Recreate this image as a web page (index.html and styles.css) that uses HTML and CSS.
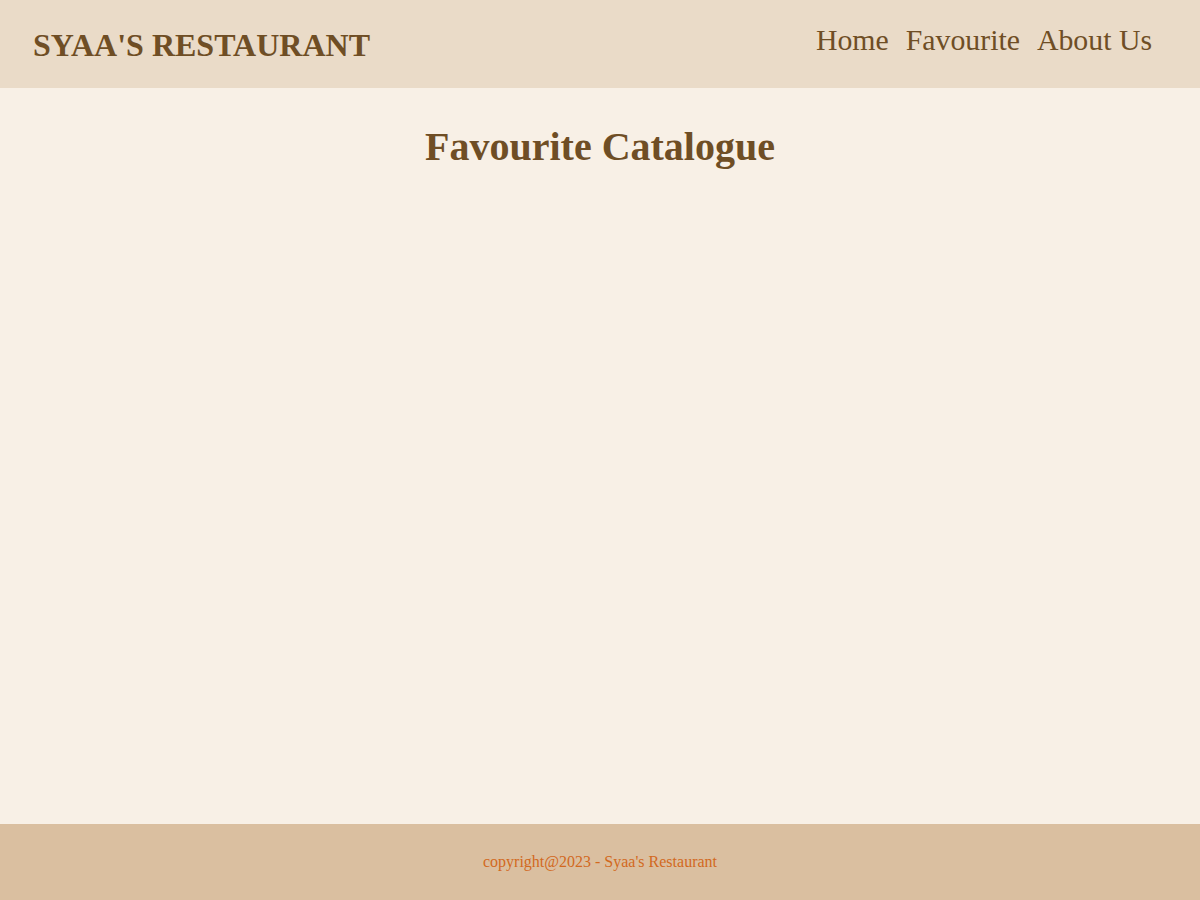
FILE: index.html
```html
<!DOCTYPE html>
<html lang="en">
<head>
<meta charset="utf-8">
<title>Syaa's Restaurant</title>
<link rel="stylesheet" href="styles.css">
</head>
<body>
<div class="page">
  <header class="app-bar">
    <h1 class="brand">SYAA'S RESTAURANT</h1>
    <nav class="nav">
      <a class="nav-link" href="#">Home</a>
      <a class="nav-link" href="#">Favourite</a>
      <a class="nav-link" href="#">About Us</a>
    </nav>
  </header>
  <main class="content">
    <h2 class="content-title">Favourite Catalogue</h2>
  </main>
  <footer class="footer">
    <p class="footer-text">copyright@2023 - Syaa's Restaurant</p>
  </footer>
</div>
</body>
</html>
```

FILE: styles.css
```css
html, body {
  margin: 0;
  padding: 0;
}
body {
  font-family: "Liberation Serif", "Times New Roman", serif;
  background: #f8f0e6;
  color: #6f4e25;
}
.page {
  min-height: 100vh;
  display: flex;
  flex-direction: column;
}
.app-bar {
  height: 88px;
  box-sizing: border-box;
  background: #eadbc8;
  display: flex;
  align-items: center;
  justify-content: space-between;
  padding: 0 48px 0 33px;
}
.brand {
  margin: 2px 0 0 0;
  font-size: 32px;
  font-weight: bold;
  color: #6f4e25;
}
.nav {
  display: flex;
  gap: 17px;
  margin-top: -8px;
}
.nav-link {
  font-size: 29.8px;
  color: #6f4e25;
  text-decoration: none;
}
.content {
  flex: 1;
}
.content-title {
  margin: 35px 0 0 0;
  text-align: center;
  font-size: 40px;
  font-weight: bold;
  color: #6f4e25;
}
.footer {
  height: 76px;
  background: #dabfa0;
  display: flex;
  align-items: center;
  justify-content: center;
}
.footer-text {
  margin: 0;
  font-size: 16px;
  color: #d2691e;
}
```
